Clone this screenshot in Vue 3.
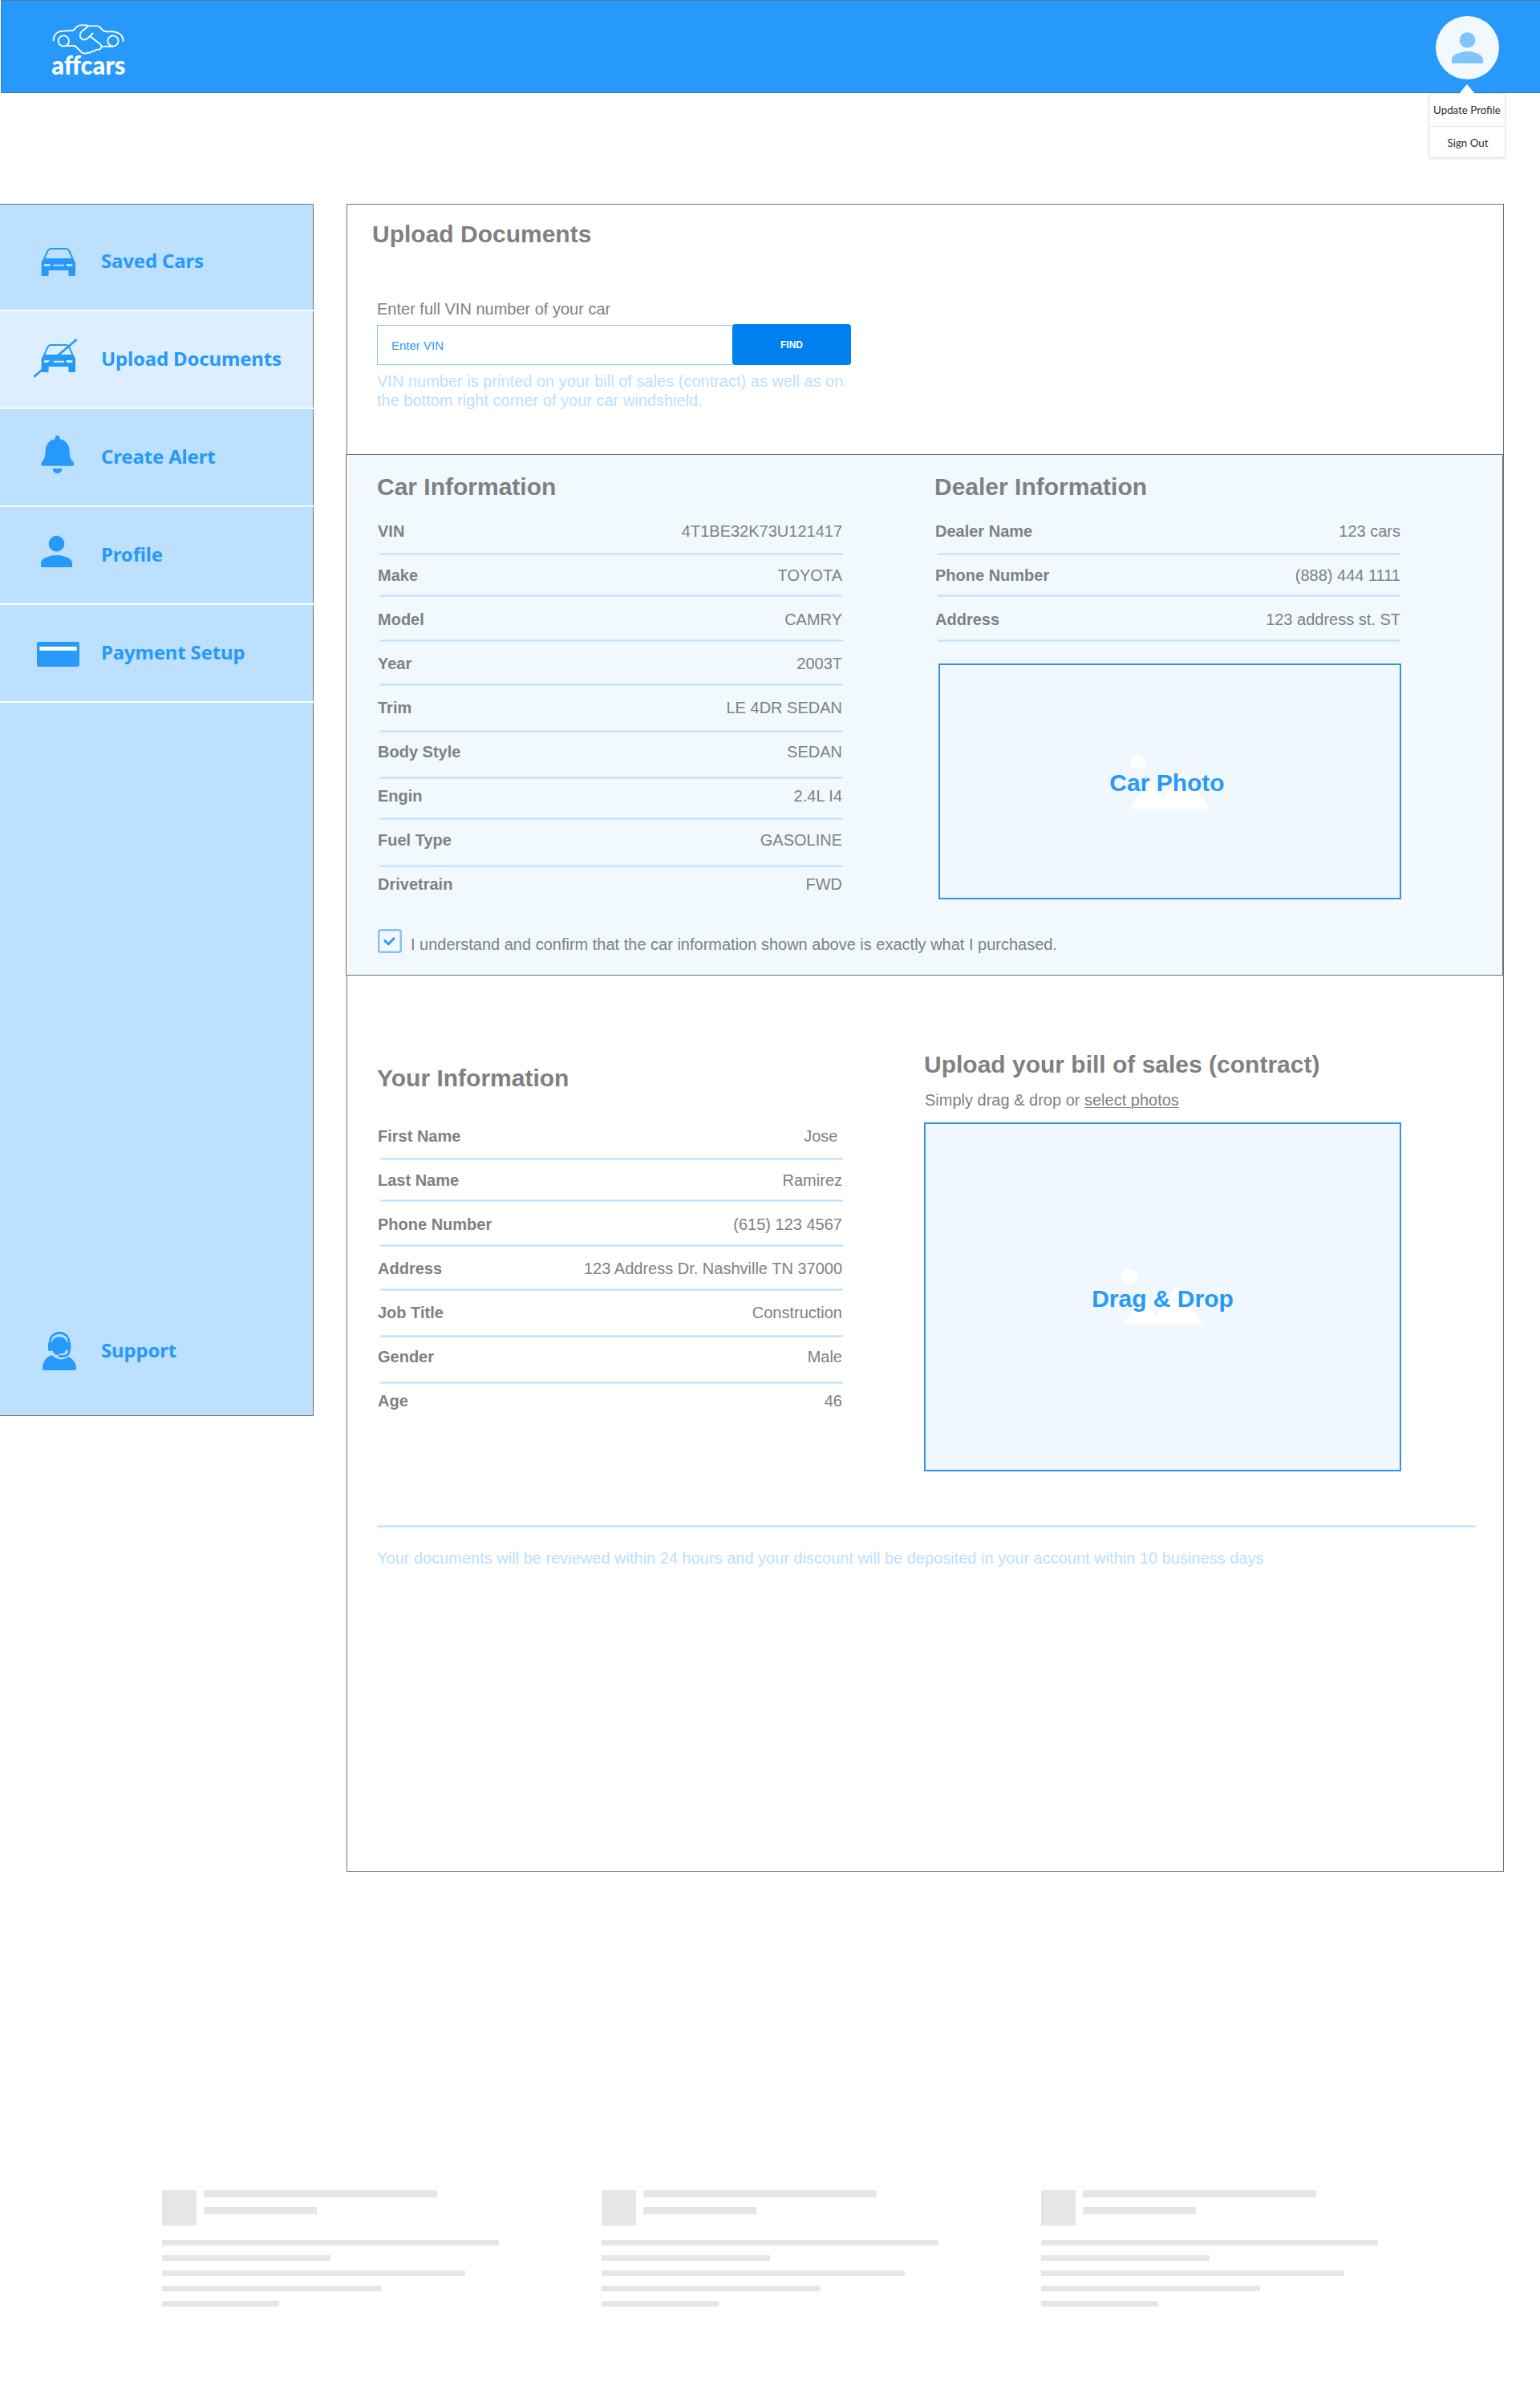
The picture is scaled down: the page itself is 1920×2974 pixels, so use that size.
<script setup>
const nav = [
  { label: 'Saved Cars', icon: 'car', box: '120 78 180 360' },
  { label: 'Upload Documents', icon: 'carOff', box: '120 84 180 360', active: true },
  { label: 'Create Alert', icon: 'bell', box: '120 -150 180 360' },
  { label: 'Profile', icon: 'person', box: '120 216 180 360' },
  { label: 'Payment Setup', icon: 'card', box: '120 582 180 360' },
]

// rule: distance in px between a row's text and the rule below it
const car = [
  { label: 'VIN', value: '4T1BE32K73U121417', rule: 15 },
  { label: 'Make', value: 'TOYOTA', rule: 12 },
  { label: 'Model', value: 'CAMRY', rule: 13 },
  { label: 'Year', value: '2003T', rule: 13 },
  { label: 'Trim', value: 'LE 4DR SEDAN', rule: 16 },
  { label: 'Body Style', value: 'SEDAN', rule: 19 },
  { label: 'Engin', value: '2.4L I4', rule: 15 },
  { label: 'Fuel Type', value: 'GASOLINE', rule: 19 },
  { label: 'Drivetrain', value: 'FWD' },
]
const dealer = [
  { label: 'Dealer Name', value: '123 cars', rule: 15 },
  { label: 'Phone Number', value: '(888) 444 1111', rule: 12 },
  { label: 'Address', value: '123 address st. ST', rule: 13 },
]
const person = [
  { label: 'First Name', value: 'Jose ', rule: 15 },
  { label: 'Last Name', value: 'Ramirez', rule: 12 },
  { label: 'Phone Number', value: '(615) 123 4567', rule: 13 },
  { label: 'Address', value: '123 Address Dr. Nashville TN 37000', rule: 13 },
  { label: 'Job Title', value: 'Construction', rule: 16 },
  { label: 'Gender', value: 'Male', rule: 19 },
  { label: 'Age', value: '46' },
]
const ruleStyle = (r) => ({ marginTop: r + 'px', marginBottom: 28 - r + 'px' })
const bars = [420, 210, 378, 273, 146]
</script>

<template>
  <div class="page">
    <header class="topbar">
      <svg class="logo" viewBox="190 85 285 205">
        <g fill="none" stroke="#fff" stroke-width="5.5" stroke-linejoin="round">
          <path d="M201 155C200 128 216 117 242 117L275 115L291 99Q296 95 302 95H324L331 99L307 118Q296 131 303 143Q314 155 328 145L350 124" />
          <path d="M329 98H362Q370 98 375 103L388 116Q392 119 400 119H418Q462 121 462 156" />
          <path d="M337 136L375 165Q384 174 378 182Q373 189 361 186Q357 195 347 192Q343 200 331 197Q321 205 308 198L281 172H246" />
          <path d="M380 175H424" />
          <circle cx="239" cy="154" r="20" />
          <circle cx="424" cy="154" r="20" />
        </g>
        <text x="194" y="280" textLength="276" lengthAdjust="spacingAndGlyphs">affcars</text>
      </svg>
      <div class="account">
        <svg class="avatar" viewBox="0 0 79 79">
          <circle cx="39.5" cy="39.5" r="39.5" fill="#f1f9ff" />
          <g fill="#7fc4fd">
            <circle cx="39.5" cy="30" r="9.8" />
            <path d="M20 59v-5c0-6.500 13-10 19.500-10s19.500 3.500 19.500 10v5z" />
          </g>
        </svg>
        <div class="menu">
          <span>Update Profile</span>
          <span>Sign Out</span>
        </div>
      </div>
    </header>

    <div class="body">
      <aside class="sidebar">
        <div v-for="n in nav" :key="n.label" class="item" :class="{ active: n.active }">
          <svg :viewBox="n.box" fill="#2699fb">
            <g v-if="n.icon === 'car' || n.icon === 'carOff'">
              <path d="M165 248L178 219Q182 210 191 210H246Q255 210 259 219L272 248" fill="none" stroke="#2699fb" stroke-width="6" />
              <path fill-rule="evenodd" d="M163 246H274L282 260V307Q282 312 277 312H261Q256 312 256 307V291H182V307Q182 312 177 312H160Q155 312 155 307V260ZM169 267Q164 267 164 272Q164 276 169 276H180Q190 276 188 267ZM200 269V275H239V269ZM249 267Q246 276 254 276H266Q272 276 272 271Q272 267 266 267Z" />
              <g v-if="n.icon === 'carOff'" fill="none" stroke="#2699fb" stroke-width="8">
                <path d="M127 329L170 292" />
                <path d="M165 296L188 268" stroke-width="5" />
                <path d="M216 250L287 189" />
              </g>
            </g>
            <g v-else-if="n.icon === 'bell'">
              <path d="M206 -43a9 9 0 0 1 18 0v5C246 -34 260 -17 260 8C260 30 266 40 275 49Q280 62 269 62H161Q150 62 155 50C164 40 170 30 170 8C170 -17 184 -34 206 -38Z" />
              <path d="M197 72H232Q230 90 214.500 90T197 72Z" />
            </g>
            <g v-else-if="n.icon === 'person'">
              <circle cx="211.500" cy="353" r="29.500" />
              <path d="M153 441V425C153 406 191 396 211.500 396S270 406 270 425V441Z" />
            </g>
            <g v-else>
              <rect x="138" y="720" width="159" height="93" rx="7" />
              <rect x="148" y="738" width="139" height="15" fill="#fff" />
            </g>
          </svg>
          <span>{{ n.label }}</span>
        </div>
        <div class="item support">
          <svg viewBox="120 12 180 360" fill="#2699fb">
            <path d="M159 256C160 230 174 213 194 207Q222 236 256 213Q284 228 285 256Q285 264 278 264H166Q159 264 159 256Z" />
            <path d="M187 165V160C187 112 258 112 258 160V165" fill="none" stroke="#2699fb" stroke-width="8" />
            <path d="M222 139C240 139 252 152 252 170C252 184 246 198 236 206H208C198 198 192 184 192 170C192 152 204 139 222 139Z" />
            <rect x="180" y="158" width="16" height="34" rx="7" />
            <rect x="249" y="158" width="16" height="34" rx="7" />
            <path d="M255 190C255 207 244 212 222 212" fill="none" stroke="#bce0fd" stroke-width="20" />
            <path d="M260 184C260 207 248 212 222 212" fill="none" stroke="#2699fb" stroke-width="8" stroke-linecap="round" />
          </svg>
          <span>Support</span>
        </div>
      </aside>

      <main class="panel">
        <section class="find">
          <h2>Upload Documents</h2>
          <p class="ask">Enter full VIN number of your car</p>
          <div class="search">
            <div class="field">Enter VIN</div>
            <div class="button">FIND</div>
          </div>
          <p class="hint">VIN number is printed on your bill of sales (contract) as well as on<br>the bottom right corner of your car windshield.</p>
        </section>

        <section class="info">
          <div class="columns">
            <div class="col">
              <h2>Car Information</h2>
              <div class="rows">
                <template v-for="r in car" :key="r.label">
                  <div class="row"><b>{{ r.label }}</b><span>{{ r.value }}</span></div>
                  <div v-if="r.rule" class="rule" :style="ruleStyle(r.rule)"></div>
                </template>
              </div>
            </div>
            <div class="col dealer">
              <h2>Dealer Information</h2>
              <div class="rows">
                <template v-for="r in dealer" :key="r.label">
                  <div class="row"><b>{{ r.label }}</b><span>{{ r.value }}</span></div>
                  <div class="rule" :style="ruleStyle(r.rule)"></div>
                </template>
              </div>
              <div class="drop photo">
                <svg viewBox="0 0 573 290" fill="#fff">
                  <ellipse cx="246.500" cy="120.400" rx="9.500" ry="9.500" />
                  <path d="M237 179L261 142L277 168L303 132L336 179Z" />
                </svg>
                <span>Car Photo</span>
              </div>
            </div>
          </div>
          <div class="confirm">
            <svg viewBox="0 0 30 30" fill="none">
              <rect x="1.250" y="1.250" width="27.500" height="27.500" rx="2.500" stroke="#86c2f5" stroke-width="2.500" />
              <path d="M8 13.700L13.300 18.800L20.700 11" stroke="#2699fb" stroke-width="2.800" />
            </svg>
            <span>I understand and confirm that the car information shown above is exactly what I purchased.</span>
          </div>
        </section>

        <section class="yours">
          <div class="col">
            <h2>Your Information</h2>
            <div class="rows">
              <template v-for="r in person" :key="r.label">
                <div class="row"><b>{{ r.label }}</b><span>{{ r.value }}</span></div>
                <div v-if="r.rule" class="rule" :style="ruleStyle(r.rule)"></div>
              </template>
            </div>
          </div>
          <div class="upload">
            <h2>Upload your bill of sales (contract)</h2>
            <p>Simply drag &amp; drop or <u>select photos</u></p>
            <div class="drop bill">
              <svg viewBox="0 0 591 431" fill="#fff">
                <circle cx="254" cy="190.300" r="9.800" />
                <path d="M246 250L270 212L287 239L313 202L346 250Z" />
              </svg>
              <span>Drag &amp; Drop</span>
            </div>
          </div>
        </section>
        <div class="rule end"></div>
        <p class="note">Your documents will be reviewed within 24 hours and your discount will be deposited in your account within 10 business days</p>
      </main>
    </div>

    <footer class="footer">
      <div v-for="c in 3" :key="c" class="block">
        <div class="head">
          <i class="thumb"></i>
          <div class="titles"><i class="long"></i><i class="short"></i></div>
        </div>
        <i v-for="w in bars" :key="w" class="bar" :style="{ width: w + 'px' }"></i>
      </div>
    </footer>
  </div>
</template>

<style>
body { background: #fff; }
</style>

<style scoped>
.page {
  width: 1920px;
  height: 2974px;
  overflow: hidden;
  font-family: "Liberation Sans", Arial, sans-serif;
  font-size: 20px;
  line-height: 24px;
  color: #808080;
}
.page * { box-sizing: border-box; }
h2, p { margin: 0; }
h2 { font-size: 30px; line-height: 36px; font-weight: 700; white-space: nowrap; }

.topbar {
  display: flex;
  justify-content: space-between;
  align-items: flex-start;
  height: 116px;
  margin-left: 1px;
  padding: 19px 51px 0 61px;
  background: #2699fb;
  border: 1px solid #4b7ba6;
  border-right: 0;
}
.logo { width: 95px; height: 68.300px; margin-top: 8.300px; overflow: visible; }
.logo text { font: 900 98px Lato, sans-serif; fill: #fff; }
.account { position: relative; width: 79px; height: 79px; }
.avatar { display: block; width: 79px; height: 79px; }
.menu {
  position: absolute;
  top: 96px;
  left: -9px;
  width: 96px;
  height: 81px;
  background: #fff;
  border: 1px solid #e4e4e4;
  border-radius: 4px;
  box-shadow: 0 1px 3px rgba(0, 0, 0, .1);
  font: 13.300px/39px Lato, sans-serif;
  color: #2d2d2d;
  text-align: center;
  white-space: nowrap;
}
.menu::before {
  content: "";
  position: absolute;
  top: -12px;
  left: 37px;
  border: 10px solid transparent;
  border-top: 0;
  border-bottom: 12px solid #fff;
}
.menu span { display: block; height: 40px; padding-top: 1px; }
.menu span + span { border-top: 1px solid #e4e4e4; padding-left: 2px; }

.body { display: flex; align-items: flex-start; margin-top: 138px; }
.sidebar {
  display: flex;
  flex-direction: column;
  width: 391px;
  height: 1511px;
  margin-right: 41px;
  background: #bce0fd;
  border: 1px solid #707070;
  border-left: 0;
}
.item {
  display: flex;
  align-items: center;
  height: 122px;
  margin-right: -1px;
  border-bottom: 2px solid #fff;
}
.item:not(.active):not(.support) { background: linear-gradient(#bce0fd, #bce0fd) left / 390px 100% no-repeat, #707070; background-clip: padding-box; }
.item.active { background: linear-gradient(#dceeff, #dceeff) left / 390px 100% no-repeat, #707070; background-clip: padding-box; }
.item:first-child { height: 133px; padding-top: 11px; }
.item svg { width: 60px; height: 120px; margin-left: 40px; flex: none; }
.item span {
  margin-left: 26px;
  padding-bottom: 3px;
  font: 700 24px/34px "Noto Sans", "Open Sans", sans-serif;
  letter-spacing: -.17px;
  color: #2699fb;
  white-space: nowrap;
}
.support { margin-top: 747px; border: 0; }

.panel { width: 1443px; height: 2079px; border: 1px solid #707070; }
.find { height: 311px; padding: 19px 0 0 32px; }
.find h2 { margin-left: -1px; }
.ask { margin: 63px 0 0 5px; }
.search { display: flex; align-items: flex-end; margin: 7px 0 0 5px; }
.field {
  width: 443px;
  height: 50px;
  padding-left: 17px;
  border: 1px solid #8fc2ea;
  border-right: 0;
  font-size: 15px;
  line-height: 50px;
  color: #2699fb;
}
.button {
  width: 148px;
  height: 51px;
  background: #007fee;
  border-radius: 4px;
  font-size: 12px;
  font-weight: 700;
  line-height: 52px;
  color: #fff;
  text-align: center;
}
.hint { margin: 8px 0 0 5px; color: #bce0fd; white-space: nowrap; }

.info {
  width: 1443px;
  height: 650px;
  margin-left: -2px;
  padding: 22px 0 0 39px;
  background: #f1f9ff;
  border: 1px solid #707070;
}
.columns { display: flex; height: 569px; }
.col { width: 580px; }
.col h2 { margin-left: -1px; }
.dealer { margin-left: 115px; }
.rows { margin-top: 25px; }
.row { display: flex; justify-content: space-between; height: 24px; white-space: pre; }
.col:not(.dealer) .row { padding-right: 1px; }
.rule { height: 3px; margin-left: 3px; background: linear-gradient(#d6ecfe 1px, #bedffb 1px, #bedffb 2px, #d6ecfe 2px); }
.drop { position: relative; border: 2px solid #3493e8; background: #f0f7fe; }
.drop svg { display: block; width: 100%; height: 100%; }
.drop span {
  position: absolute;
  inset: 2px 0 -2px;
  display: flex;
  align-items: center;
  justify-content: center;
  font-size: 30px;
  font-weight: 700;
  color: #2699fb;
}
.photo { width: 577px; height: 294px; margin: 27px 0 0 4px; }
.photo span { left: -7px; }
.confirm { display: flex; }
.confirm svg { width: 30px; height: 30px; }
.confirm span { margin: 7px 0 0 11px; white-space: nowrap; }

.yours { display: flex; height: 685px; padding-left: 38px; }
.yours .col { padding-top: 110px; }
.yours .rows { margin-top: 42px; }
.upload { margin-left: 101px; padding-top: 93px; }
.upload p { margin-top: 14px; padding-left: 1px; }
.upload u { text-decoration-thickness: 1px; text-underline-offset: 2px; }
.bill { width: 595px; height: 435px; margin-top: 16px; }
.end { width: 1370px; margin: 0 0 0 37px; }
.note { margin: 26px 0 0 37px; color: #bce0fd; white-space: nowrap; }

.footer { display: flex; gap: 128px; margin: 397px 0 0 202px; }
.footer i { display: block; background: #e6e6e6; }
.block { width: 420px; }
.head { display: flex; gap: 9px; margin-bottom: 18px; }
.thumb { width: 43px; height: 44px; }
.titles { display: flex; flex-direction: column; gap: 12px; }
.long { width: 291px; height: 9px; }
.short { width: 141px; height: 9px; }
.bar { height: 7px; margin-bottom: 12px; }
</style>
